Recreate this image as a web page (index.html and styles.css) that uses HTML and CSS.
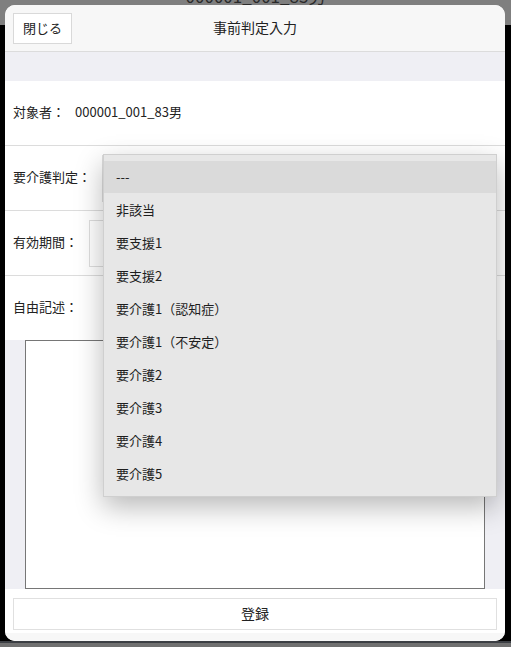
FILE: index.html
```html
<!DOCTYPE html>
<html lang="ja">
<head>
    <meta charset="UTF-8">
    <meta name="viewport" content="width=device-width, initial-scale=1.0">
    <title>事前判定入力</title>
    <link rel="stylesheet" href="styles.css">
</head>
<body>
    <div class="backdrop-bar">
        <div class="backdrop-title">000001_001_83男</div>
    </div>
    <div class="backdrop-bottom"></div>

    <div class="modal">
        <div class="modal-header">
            <button type="button" class="btn-close">閉じる</button>
            <div class="modal-title">事前判定入力</div>
        </div>
        <div class="spacer"></div>

        <div class="form-row">
            <span class="label">対象者：</span>
            <span class="value">000001_001_83男</span>
        </div>
        <div class="form-row">
            <span class="label">要介護判定：</span>
            <div class="select-box">
                <span>---</span>
                <ul class="dropdown">
                    <li class="selected">---</li>
                    <li>非該当</li>
                    <li>要支援1</li>
                    <li>要支援2</li>
                    <li>要介護1（認知症）</li>
                    <li>要介護1（不安定）</li>
                    <li>要介護2</li>
                    <li>要介護3</li>
                    <li>要介護4</li>
                    <li>要介護5</li>
                </ul>
            </div>
        </div>
        <div class="form-row">
            <span class="label">有効期間：</span>
            <div class="select-box">
                <span>---</span>
            </div>
        </div>
        <div class="form-row no-border">
            <span class="label">自由記述：</span>
        </div>
        <div class="memo-area">
            <textarea class="memo"></textarea>
        </div>

        <div class="modal-footer">
            <button type="button" class="btn-submit">登録</button>
        </div>
        <div class="modal-bottom"></div>
    </div>
</body>
</html>
```

FILE: styles.css
```css
:root {
    --header-bg: #f7f7f7;
    --band-bg: #efeff4;
    --border-color: #dcdcdc;
    --text-color: #222;
}

* {
    box-sizing: border-box;
    margin: 0;
    padding: 0;
}

body {
    font-family: "Noto Sans CJK JP", "Noto Sans", sans-serif;
    background-color: #000;
    color: var(--text-color);
    font-size: 13px;
    width: 511px;
    height: 647px;
    overflow: hidden;
}

.backdrop-bar {
    height: 25px;
    background-color: #7f7f7f;
    overflow: hidden;
}

.backdrop-title {
    text-align: center;
    font-size: 17px;
    line-height: 17px;
    margin-top: -13px;
    color: #2a2a2a;
}

.backdrop-bottom {
    position: absolute;
    left: 0;
    right: 0;
    bottom: 0;
    height: 6px;
    background-color: #3b3e43;
    border-bottom: 4px solid #707070;
}

.modal {
    position: absolute;
    top: 5px;
    left: 5px;
    width: 500px;
    height: 636px;
    background-color: #fff;
    border-radius: 10px;
    overflow: hidden;
    display: flex;
    flex-direction: column;
}

.modal-header {
    position: relative;
    height: 47px;
    background-color: var(--header-bg);
    border-bottom: 1px solid var(--border-color);
    padding: 8px;
    display: flex;
    align-items: flex-start;
}

.btn-close {
    width: 59px;
    height: 31px;
    padding-bottom: 2px;
    background-color: #fff;
    border: 1px solid #d9d9d9;
    font-family: inherit;
    font-size: 13px;
    color: var(--text-color);
}

.modal-title {
    position: absolute;
    left: 0;
    right: 0;
    top: 12px;
    text-align: center;
    font-size: 14px;
    pointer-events: none;
}

.spacer {
    height: 29px;
    background-color: var(--band-bg);
}

.form-row {
    height: 65px;
    padding: 0 8px;
    border-bottom: 1px solid var(--border-color);
    display: flex;
    align-items: center;
}

.form-row.no-border {
    border-bottom: none;
    height: 64px;
}

.label,
.value {
    padding-bottom: 3px;
}

.value {
    margin-left: 10px;
}

.select-box {
    position: relative;
    flex: 1;
    height: 47px;
    margin-left: 11px;
    border: 1px solid #dedede;
    padding: 0 13px;
    display: flex;
    align-items: center;
}

.dropdown {
    position: absolute;
    top: -2px;
    left: 0;
    width: 394px;
    list-style: none;
    padding: 6px 0 6px;
    background-color: #e7e7e7;
    border: 1px solid #cfcfcf;
    box-shadow: 0 10px 26px rgba(0, 0, 0, 0.28);
    z-index: 10;
}

.dropdown li {
    height: 33px;
    line-height: 33px;
    padding-left: 12px;
    color: #1e1e1e;
}

.dropdown li.selected {
    height: 32px;
    line-height: 32px;
    background-color: #dadada;
}

.memo-area {
    height: 249px;
    background-color: var(--band-bg);
    padding: 0 20px;
}

.memo {
    display: block;
    width: 100%;
    height: 100%;
    border: 1px solid #767676;
    resize: none;
    background-color: #fff;
}

.modal-footer {
    padding: 9px 8px 3px;
    background-color: #fff;
}

.btn-submit {
    width: 100%;
    height: 32px;
    padding-bottom: 2px;
    background-color: #fff;
    border: 1px solid #e0e0e0;
    font-family: inherit;
    font-size: 14px;
    color: var(--text-color);
}

.modal-bottom {
    flex: 1;
    background-color: var(--header-bg);
}
```
